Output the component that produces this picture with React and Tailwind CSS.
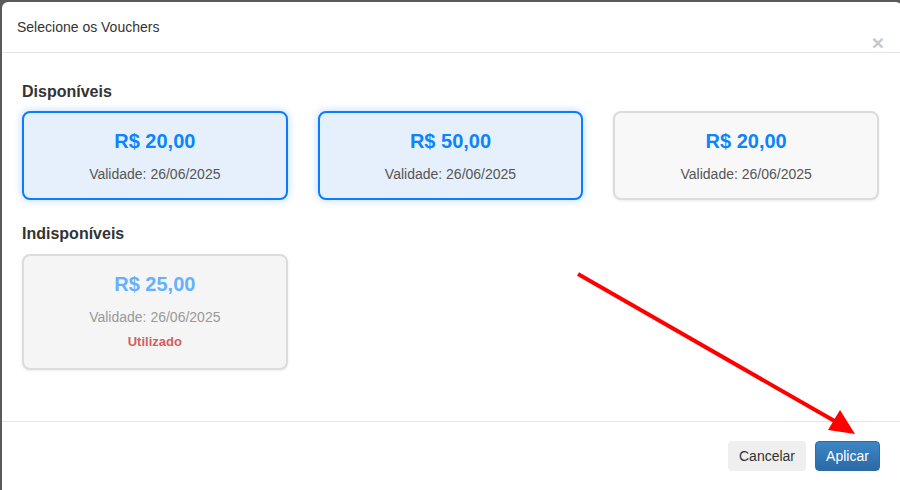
const vouchers = [
  { amount: "R$ 20,00", date: "26/06/2025", selected: true },
  { amount: "R$ 50,00", date: "26/06/2025", selected: true },
  { amount: "R$ 20,00", date: "26/06/2025", selected: false },
];

const VoucherCard = ({ amount, date, selected }) => (
  <div
    className={`flex flex-col items-center rounded-[8px] border-2 pt-[16px] pb-[14px] ${
      selected
        ? "border-[#0a7cff] bg-[#e6f0fd] shadow-[0_0_8px_rgba(0,123,255,0.3)]"
        : "border-[#dcdcdc] bg-[#f8f8f8] shadow-[0_1px_3px_rgba(0,0,0,0.08)]"
    }`}
  >
    <span className="text-[20px] leading-[24px] font-bold text-[#0a84ff]">{amount}</span>
    <span className="mt-[11px] text-[14px] leading-[20px] text-[#555]">Validade: {date}</span>
  </div>
);

export default function App() {
  return (
    <div
      className="relative w-[900px] h-[490px] overflow-hidden bg-[#5a5a5a] pl-[2px] pt-[2px]"
      style={{ fontFamily: '"Liberation Sans", Arial, sans-serif' }}
    >
      <div className="flex flex-col w-[900px] h-[500px] bg-white rounded-[6px]">
        {/* Header */}
        <div className="flex justify-between h-[51px] border-b border-[#e5e5e5] pl-[15px] pr-[18px]">
          <span className="self-center text-[14px] leading-[20px] text-[#333]">
            Selecione os Vouchers
          </span>
          <span className="self-end mb-[-1px] text-[21px] leading-none font-bold text-[#c8c8c8]">
            ×
          </span>
        </div>

        {/* Body */}
        <div className="flex flex-col h-[368px] px-[20px] pt-[29px]">
          <h3 className="text-[16px] leading-[20px] font-bold text-[#333] mb-[9px]">
            Disponíveis
          </h3>
          <div className="grid grid-cols-3 gap-[30px] w-[857px]">
            {vouchers.map((v, i) => (
              <VoucherCard key={i} {...v} />
            ))}
          </div>

          <h3 className="mt-[24px] text-[16px] leading-[20px] font-bold text-[#333] mb-[10px]">
            Indisponíveis
          </h3>
          <div className="grid grid-cols-3 gap-[30px] w-[857px]">
            <div className="flex flex-col items-center rounded-[8px] border-2 border-[#dcdcdc] bg-[#f5f5f5] pt-[16px] pb-[17px] shadow-[0_1px_3px_rgba(0,0,0,0.08)]">
              <span className="text-[20px] leading-[24px] font-bold text-[#66b0ff]">R$ 25,00</span>
              <span className="mt-[11px] text-[14px] leading-[20px] text-[#999]">
                Validade: 26/06/2025
              </span>
              <span className="mt-[6px] text-[13px] leading-[18px] font-bold text-[#d25f5f]">
                Utilizado
              </span>
            </div>
          </div>
        </div>

        {/* Footer */}
        <div className="flex justify-end gap-[9px] border-t border-[#e5e5e5] pt-[19px] pr-[22px]">
          <button className="h-[30px] w-[78px] rounded-[4px] bg-[#efefef] text-[14px] text-[#333]">
            Cancelar
          </button>
          <button className="h-[30px] w-[65px] rounded-[4px] border border-[#2e6da4] bg-gradient-to-b from-[#3d86c6] to-[#2b6aa6] text-[14px] text-white">
            Aplicar
          </button>
        </div>
      </div>

      {/* Annotation arrow */}
      <svg className="absolute inset-0 pointer-events-none" width="900" height="490">
        <line x1="578" y1="274" x2="838" y2="423" stroke="#ff0000" strokeWidth="4" />
        <polygon points="855,434 828,430 840,410" fill="#ff0000" />
      </svg>
    </div>
  );
}
